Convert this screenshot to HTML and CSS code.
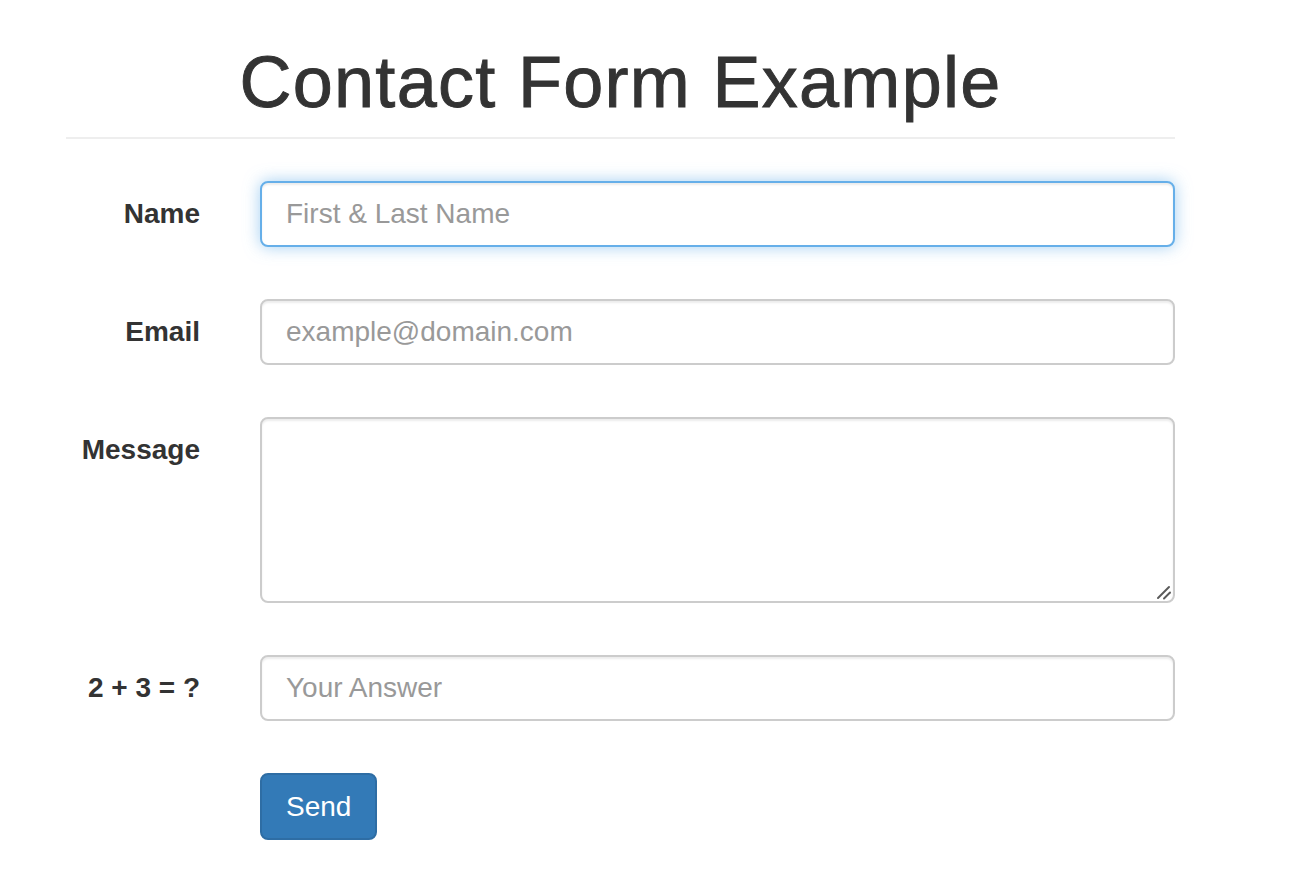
FILE: index.html
```html
<!DOCTYPE html>
<html lang="en">
<head>
<meta charset="utf-8">
<title>Contact Form Example</title>
<link rel="stylesheet" href="styles.css">
</head>
<body>
<div class="container">
  <h1 class="page-title">Contact Form Example</h1>
  <hr class="divider">
  <form class="contact-form">
    <label class="control-label" for="name">Name</label>
    <input class="form-control is-focus" id="name" type="text" placeholder="First &amp; Last Name">

    <label class="control-label" for="email">Email</label>
    <input class="form-control" id="email" type="email" placeholder="example@domain.com">

    <label class="control-label" for="message">Message</label>
    <div class="textarea-wrap">
      <textarea class="form-control form-textarea" id="message"></textarea>
      <svg class="resize-grip" width="16" height="16" viewBox="0 0 16 16" aria-hidden="true">
        <line x1="2" y1="14" x2="13" y2="3" stroke="#5a5a5a" stroke-width="2" stroke-linecap="round"/>
        <line x1="8" y1="14.5" x2="14" y2="8.5" stroke="#5a5a5a" stroke-width="2" stroke-linecap="round"/>
      </svg>
    </div>

    <label class="control-label" for="human">2 + 3 = ?</label>
    <input class="form-control" id="human" type="text" placeholder="Your Answer">

    <div class="spacer"></div>
    <div class="actions"><button class="btn-primary" type="button">Send</button></div>
  </form>
</div>
</body>
</html>
```

FILE: styles.css
```css
html, body {
  margin: 0;
  padding: 0;
  background: #fff;
}
body {
  font-family: "Liberation Sans", Arial, Helvetica, sans-serif;
  color: #333;
}
.container {
  margin-left: 66px;
  width: 1109px;
}
.page-title {
  margin: 43px 0 0;
  font-size: 72px;
  line-height: 79px;
  font-weight: 500;
  letter-spacing: 1.3px;
  text-align: center;
  color: #333;
  -webkit-text-stroke: 0.9px #333;
}
.divider {
  margin: 15px 0 0;
  border: 0;
  border-top: 2px solid #eee;
  height: 0;
}
.contact-form {
  margin-top: 42px;
  display: grid;
  grid-template-columns: 134px 915px;
  column-gap: 60px;
  row-gap: 52px;
}
.control-label {
  text-align: right;
  font-weight: bold;
  font-size: 28px;
  line-height: 40px;
  padding-top: 13px;
  color: #333;
}
.form-control {
  box-sizing: border-box;
  display: block;
  width: 915px;
  height: 66px;
  margin: 0;
  padding: 11px 24px;
  font-family: "Liberation Sans", Arial, Helvetica, sans-serif;
  font-size: 28px;
  line-height: 40px;
  color: #555;
  background: #fff;
  border: 2px solid #ccc;
  border-radius: 8px;
  box-shadow: inset 0 2px 2px rgba(0, 0, 0, 0.075);
  outline: none;
}
.form-control::placeholder {
  color: #999;
  opacity: 1;
}
.form-control.is-focus {
  border-color: #66afe9;
  box-shadow: inset 0 2px 2px rgba(0, 0, 0, 0.075), 0 0 16px rgba(102, 175, 233, 0.6);
}
.textarea-wrap {
  position: relative;
  width: 915px;
  height: 186px;
}
.form-textarea {
  height: 186px;
  resize: none;
}
.resize-grip {
  position: absolute;
  right: 3px;
  bottom: 3px;
  pointer-events: none;
}
.actions {
  display: flex;
}
.btn-primary {
  box-sizing: border-box;
  height: 67px;
  padding: 12px 24px;
  font-family: "Liberation Sans", Arial, Helvetica, sans-serif;
  font-size: 28px;
  line-height: 40px;
  color: #fff;
  background: #337ab7;
  border: 2px solid #2e6da4;
  border-radius: 8px;
  cursor: pointer;
}
```
